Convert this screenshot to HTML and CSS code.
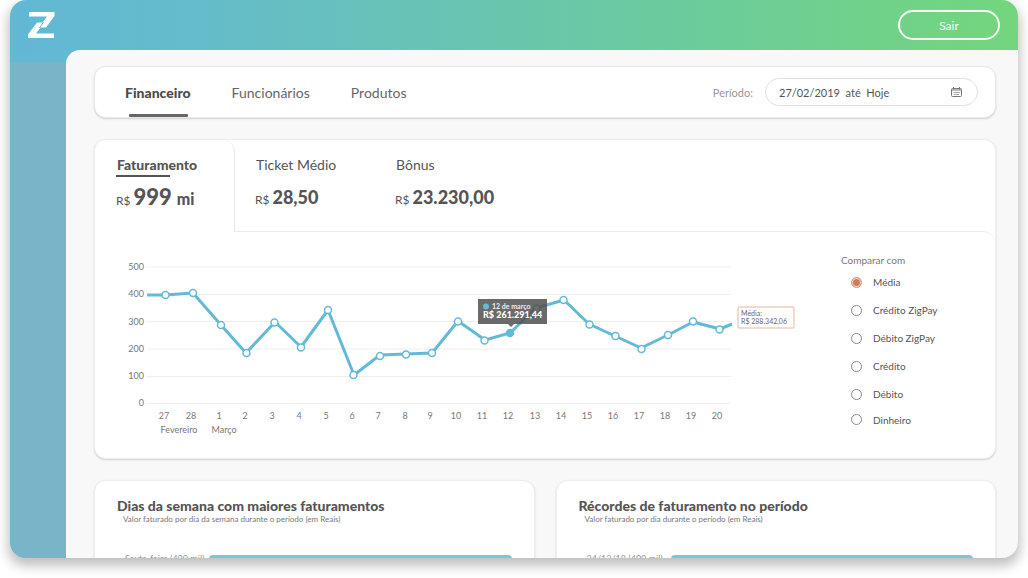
FILE: index.html
```html
<!DOCTYPE html>
<html lang="pt-BR">
<head>
<meta charset="utf-8">
<title>Financeiro</title>
<link rel="stylesheet" href="styles.css">
</head>
<body>
<div class="app">
  <header class="topbar">
    <svg class="logo" viewBox="0 0 27 27" width="27" height="27" aria-label="Zig">
      <path fill="#fff" d="M1 0H26.500V4L18 15.500H12.500L8 21.500H26V26H0V22.500L9 10.500H14.500L19 4.500H1Z"/>
      <path d="M15.500 10L11.500 16" stroke="#64bacb" stroke-width="1"/>
    </svg>
    <button class="logout" type="button">Sair</button>
  </header>
  <div class="body">
    <aside class="sidebar"></aside>
    <main class="main">
      <section class="card navcard">
        <nav class="nav">
          <a class="nav-link active" href="#">Financeiro</a>
          <a class="nav-link" href="#">Funcionários</a>
          <a class="nav-link" href="#">Produtos</a>
        </nav>
        <label class="period-label" for="period">Período:</label>
        <div class="period">
          <input id="period" type="text" value="27/02/2019  até  Hoje">
          <svg width="11" height="10" viewBox="0 0 11 10" fill="none" stroke="#777">
            <rect x="0.500" y="1.500" width="10" height="8" rx="1"/>
            <path d="M0.500 3H10.500M2.500 0V2.500M8.500 0V2.500"/>
            <path d="M2.500 5.500H9M2.500 7.500H8" stroke="#aaa"/>
          </svg>
        </div>
      </section>

      <section class="card revenue">
        <div class="tabs">
          <button class="tab selected" type="button">
            <span class="tab-name">Faturamento</span>
            <span class="amount"><small>R$</small><b class="big">999</b><b class="unit">mi</b></span>
          </button>
          <button class="tab" type="button">
            <span class="tab-name">Ticket Médio</span>
            <span class="amount"><small>R$</small><b>28,50</b></span>
          </button>
          <button class="tab" type="button">
            <span class="tab-name">Bônus</span>
            <span class="amount"><small>R$</small><b>23.230,00</b></span>
          </button>
        </div>
        <div class="panel">
          <svg class="chart" viewBox="116 250 684 190" role="img" aria-label="Faturamento por dia">
            <path class="grid" d="M147 267H731M147 294.500H731M147 321.500H731M147 349H731M147 376.500H731M147 403.500H731"/>
            <g class="ylabels">
              <text x="144" y="270">500</text><text x="144" y="297">400</text><text x="144" y="325">300</text>
              <text x="144" y="352">200</text><text x="144" y="379">100</text><text x="144" y="406">0</text>
            </g>
            <g class="xlabels">
              <text x="164" y="419">27</text><text x="191" y="419">28</text><text x="219" y="419">1</text><text x="245" y="419">2</text>
              <text x="272" y="419">3</text><text x="299" y="419">4</text><text x="326" y="419">5</text><text x="352" y="419">6</text>
              <text x="378" y="419">7</text><text x="405" y="419">8</text><text x="430" y="419">9</text><text x="456" y="419">10</text>
              <text x="482" y="419">11</text><text x="508" y="419">12</text><text x="535" y="419">13</text><text x="561" y="419">14</text>
              <text x="587" y="419">15</text><text x="613" y="419">16</text><text x="639" y="419">17</text><text x="665" y="419">18</text>
              <text x="691" y="419">19</text><text x="717" y="419">20</text>
              <text x="179" y="433">Fevereiro</text><text x="224" y="433">Março</text>
            </g>
            <path class="line" d="M147 295L165 295L193 293L221 325L246 353L275 322L301 347L328 310L354 375L380 355L406 354L432 353L458 321L485 340L510 333L536 308L564 300L589 324L615 336L641 348L668 335L693 322L720 329L732 324"/>
            <g class="dots">
              <circle cx="165.500" cy="295" r="3.500"/><circle cx="193" cy="293" r="3.500"/><circle cx="221" cy="325" r="3.500"/>
              <circle cx="246.500" cy="353" r="3.500"/><circle cx="274.500" cy="322.500" r="3.500"/><circle cx="301" cy="347.500" r="3.500"/>
              <circle cx="328" cy="310" r="3.500"/><circle cx="353.500" cy="375" r="3.500"/><circle cx="380" cy="356" r="3.500"/>
              <circle cx="406" cy="354.500" r="3.500"/><circle cx="432" cy="353" r="3.500"/><circle cx="458" cy="321.500" r="3.500"/>
              <circle cx="484.500" cy="340.500" r="3.500"/><circle class="on" cx="510" cy="333" r="3.500"/><circle cx="536.500" cy="308.500" r="3.500"/>
              <circle cx="563.500" cy="300" r="3.500"/><circle cx="589.500" cy="324.500" r="3.500"/><circle cx="615.500" cy="336" r="3.500"/>
              <circle cx="641.500" cy="349" r="3.500"/><circle cx="668" cy="335" r="3.500"/><circle cx="693" cy="321.500" r="3.500"/>
              <circle cx="719.500" cy="329.500" r="3.500"/>
            </g>
            <path class="tip" d="M478 299H547V324H514L511 327L508 324H478Z"/>
            <circle cx="486" cy="306.500" r="3" fill="#64bad6"/>
            <text class="tip-day" x="492" y="309">12 de março</text>
            <text class="tip-value" x="483" y="318">R$ 261.291,44</text>
            <rect class="avg" x="738" y="307" width="56" height="21" rx="1"/>
            <text class="avg-text" x="741" y="316">Média:</text>
            <text class="avg-text" x="741" y="324">R$ 288.342,06</text>
          </svg>
          <fieldset class="compare">
            <legend>Comparar com</legend>
            <label><input type="radio" name="cmp" checked>Média</label>
            <label><input type="radio" name="cmp">Crédito ZigPay</label>
            <label><input type="radio" name="cmp">Débito ZigPay</label>
            <label><input type="radio" name="cmp">Crédito</label>
            <label><input type="radio" name="cmp">Débito</label>
            <label><input type="radio" name="cmp">Dinheiro</label>
          </fieldset>
        </div>
      </section>

      <div class="reports">
        <section class="card report">
          <h2>Dias da semana com maiores faturamentos</h2>
          <p>Valor faturado por dia da semana durante o período (em Reais)</p>
          <div class="row"><span>Sexta-feira (400 mil)</span><div class="bar"></div></div>
        </section>
        <section class="card report">
          <h2>Récordes de faturamento no período</h2>
          <p>Valor faturado por dia durante o período (em Reais)</p>
          <div class="row"><span>24/12/18 (400 mil)</span><div class="bar"></div></div>
        </section>
      </div>
    </main>
  </div>
</div>
</body>
</html>
```
FILE: styles.css
```css
* { box-sizing: border-box; }
body {
  margin: 0;
  padding: 0 10px 20px;
  height: 100vh;
  overflow: hidden;
  background: #fff;
  color: #555;
  font-family: Lato, "Open Sans", sans-serif;
}
button, input { font: inherit; color: inherit; }
.app {
  height: 100%;
  display: flex;
  flex-direction: column;
  overflow: hidden;
  border-radius: 16px;
  background: linear-gradient(90deg, #62b8d5 0%, #65bcc9 20%, #6ccb9d 66%, #73d67d 100%);
  box-shadow: 0 6px 12px 2px rgba(0, 0, 0, 0.25);
}
.topbar {
  flex: none;
  height: 50px;
  display: flex;
  align-items: center;
  justify-content: space-between;
  padding: 0 18px;
}
.logout {
  width: 102px;
  height: 30px;
  border: 2px solid #f4fff6;
  border-radius: 15px;
  background: none;
  color: #f4fff6;
  font-size: 12px;
}
.body { flex: 1; min-height: 0; display: grid; grid-template-columns: 56px 1fr; }
.sidebar { margin-top: 12px; background: #78b5c8; }
.main {
  min-height: 0;
  overflow: hidden;
  display: flex;
  flex-direction: column;
  gap: 21px;
  padding: 16px 22px 0 28px;
  border-top-left-radius: 14px;
  background: #f8f8f8;
}
.card {
  flex: none;
  background: #fff;
  border: 1px solid #e8e8e8;
  border-radius: 12px;
  box-shadow: 0 1px 2px rgba(0, 0, 0, 0.16);
}
.navcard { height: 52px; display: flex; align-items: stretch; padding: 0 17px 0 30px; }
.nav { flex: 1; display: flex; gap: 41px; }
.nav-link {
  display: flex;
  align-items: center;
  color: #666;
  font-size: 14px;
  text-decoration: none;
}
.nav-link.active,
.selected .tab-name,
.amount b,
.report h2,
.tip-value { font-weight: 900; }
.nav-link.active { position: relative; color: #4c4c4c; }
.nav-link.active::after {
  content: "";
  position: absolute;
  left: 4px;
  right: 3px;
  bottom: 0;
  height: 3px;
  border-radius: 1px;
  background: #666;
}
.period-label { align-self: center; margin-right: 12px; color: #999; font-size: 11px; }
.period {
  align-self: center;
  width: 213px;
  height: 28px;
  display: flex;
  align-items: center;
  padding: 0 15px 0 13px;
  border: 1px solid #e0e0e0;
  border-radius: 14px;
}
.period input {
  flex: 1;
  min-width: 0;
  padding: 0;
  border: 0;
  outline: 0;
  background: none;
  font-size: 11px;
  white-space: pre;
}
.revenue { border-color: #eee; }
.tabs { display: flex; height: 92px; }
.tab {
  width: 140px;
  display: flex;
  flex-direction: column;
  align-items: flex-start;
  padding: 16px 0 0 20px;
  border: 0;
  background: none;
  text-align: left;
}
.tab.selected {
  z-index: 1;
  padding-left: 21px;
  border-right: 1px solid #e8e8e8;
  border-radius: 12px 12px 0 0;
  background: #fff;
}
.tab-name { padding-left: 1px; font-size: 14px; line-height: 18px; }
.selected .tab-name { position: relative; }
.selected .tab-name::after {
  content: "";
  position: absolute;
  left: 0;
  bottom: -3px;
  width: 54px;
  height: 2px;
  background: #555;
}
.amount {
  display: flex;
  align-items: baseline;
  gap: 3px;
  margin-top: 11px;
  font-size: 18px;
  line-height: 24px;
  white-space: nowrap;
}
.amount small { font-size: 12px; }
.amount .big { font-size: 22px; }
.amount .unit { margin-left: 2px; font-size: 16px; }
.panel {
  display: flex;
  align-items: flex-start;
  margin-top: -1px;
  padding: 18px 20px 18px 21px;
  border-top: 1px solid #ececec;
  border-radius: 0 12px 0 0;
}
.chart { flex: 1; min-width: 0; font-size: 9px; }
.grid { stroke: #eee; stroke-width: 1; }
.ylabels { fill: #777; text-anchor: end; }
.xlabels { fill: #777; text-anchor: middle; }
.line { fill: none; stroke: #64bad6; stroke-width: 3; stroke-linejoin: round; }
.dots { fill: #fff; stroke: #64bad6; stroke-width: 1.5; }
.dots .on { fill: #64bad6; }
.tip { fill: #505050; fill-opacity: 0.85; }
.tip-day { fill: #eee; font-size: 7px; font-weight: 700; }
.tip-value { fill: #fff; font-size: 9px; }
.avg { fill: #fff; stroke: #e5b5a3; }
.avg-text { fill: #666; font-size: 7px; }
.compare {
  width: 154px;
  margin: 3px 0 0 21px;
  padding: 0;
  border: 0;
  font-size: 10px;
}
.compare legend { padding: 0 0 0 20px; line-height: 15px; color: #777; }
.compare label { display: flex; align-items: center; gap: 11px; height: 28px; padding-left: 30px; }
.compare label:last-child { height: 23px; }
.compare input {
  appearance: none;
  width: 11px;
  height: 11px;
  margin: 0;
  border: 1px solid #888;
  border-radius: 50%;
}
.compare input:checked { border-color: #dd9a7b; background: #cf7d58; box-shadow: inset 0 0 0 1px #f5ddd2; }
.reports { display: grid; grid-template-columns: 1fr 1fr; gap: 21px; }
.report { height: 200px; padding: 16px 22px; border-color: #eee; }
.report h2 { margin: 0; font-size: 14px; line-height: 18px; }
.report p { margin: 0 0 0 6px; font-size: 8px; line-height: 8px; color: #777; }
.row { display: flex; margin-top: 32px; font-size: 9px; color: #999; }
.row span { width: 92px; padding-left: 8px; line-height: 8px; white-space: nowrap; }
.bar { flex: 1; height: 14px; border-radius: 4px; background: #7fc3d9; }
```
